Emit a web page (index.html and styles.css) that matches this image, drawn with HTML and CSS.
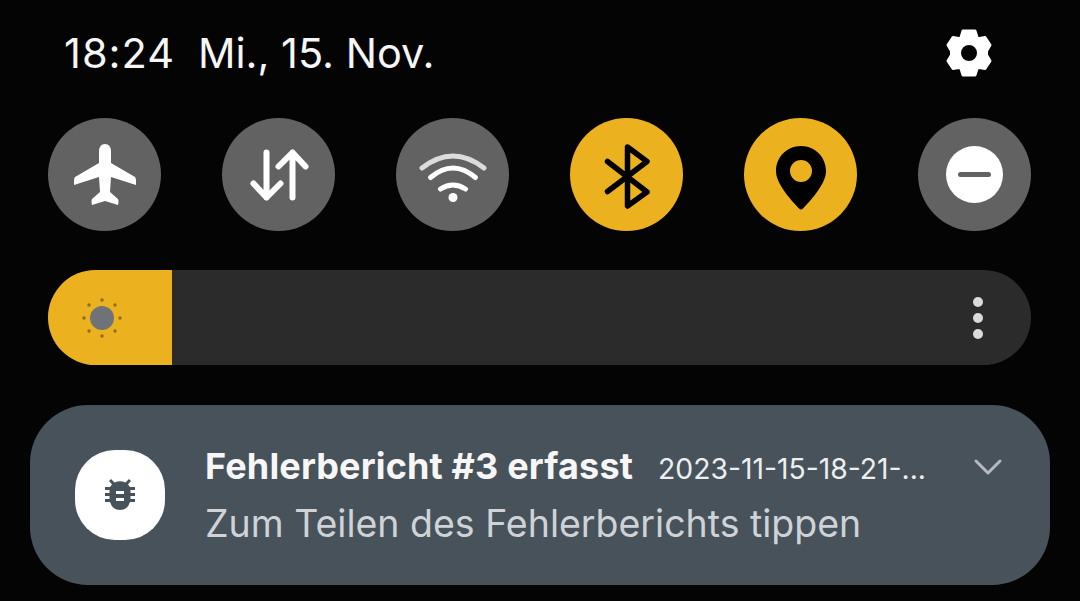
FILE: index.html
```html
<!DOCTYPE html>
<html lang="de">

<head>
    <meta charset="UTF-8">
    <title>Schnelleinstellungen</title>
    <link rel="stylesheet" href="styles.css">
</head>

<body>
    <!-- Status row -->
    <div class="status">
        <div class="clock">
            <span class="time">18:24</span>
            <span class="date">Mi., 15. Nov.</span>
        </div>
        <svg class="gear" viewBox="0 0 48 48">
            <path fill="#fff" stroke="#fff" stroke-width="3" stroke-linejoin="round" fill-rule="evenodd" d="M18 2 H30 L32 8.500 Q33 9.500 34.500 9.500 L40 8.500 L45 16 L41.500 22 V26 L45 32 L40 39.500 L34.500 38.500 Q33 38.500 32 39.500 L30 46 H18 L16 39.500 Q15 38.500 13.500 38.500 L8 39.500 L3 32 L6.500 26 V22 L3 16 L8 8.500 L13.500 9.500 Q15 9.500 16 8.500 Z M24 14.500 A9.500 9.500 0 1 0 24 33.500 A9.500 9.500 0 1 0 24 14.500 Z" />
        </svg>
    </div>

    <!-- Quick toggles -->
    <div class="toggles">
        <div class="toggle">
            <svg viewBox="0 0 62 62" width="62" height="62">
                <path fill="#fff" d="M31 0 Q37 0 37 8 V19 L61 33 Q62.500 35 62 41 L37 33 L36 48 L44 55 Q45 57 44 61 L31 57 L18 61 Q17 57 18 55 L26 48 L25 33 L0 41 Q-0.500 35 1 33 L25 19 V8 Q25 0 31 0 Z" />
            </svg>
        </div>
        <div class="toggle">
            <svg viewBox="0 0 62 62" width="62" height="62" fill="none" stroke="#fff" stroke-width="6" stroke-linecap="round" stroke-linejoin="round">
                <path d="M18.500 8.500 V53.500 M5.500 39.500 L18.500 53.500 L32.500 39.500" />
                <path d="M44.500 53.500 V8.500 M30.500 22.500 L44.500 8.500 L57.500 22.500" />
            </svg>
        </div>
        <div class="toggle">
            <svg viewBox="0 0 68 56" width="68" height="56" fill="none" stroke="#fff" stroke-width="5" stroke-linecap="round">
                <path stroke="#dcdcdc" d="M3 21 Q34 -3 65 21" />
                <path d="M11.500 30.500 Q34 11.500 56.500 30.500" />
                <path d="M21.500 42 Q34 34 46.500 42" />
                <circle cx="34" cy="50.500" r="4.500" fill="#fff" stroke="none" />
            </svg>
        </div>
        <div class="toggle on">
            <svg viewBox="0 -3 46 68" width="46" height="68" fill="none" stroke="#000" stroke-width="5.500" stroke-linecap="round" stroke-linejoin="round">
                <path d="M3.500 17.500 L43 48 L23.500 62 V3 L43 17.500 L3.500 47.500" />
            </svg>
        </div>
        <div class="toggle on">
            <svg viewBox="0 -6 50 70" width="50" height="70">
                <path fill="#000" fill-rule="evenodd" d="M25 0 C39 0 50 11 50 25 C50 37 37 52 27 62.500 Q25 64.500 23 62.500 C13 52 0 37 0 25 C0 11 11 0 25 0 Z M25 14 A11 11 0 1 0 25 36 A11 11 0 1 0 25 14 Z" />
            </svg>
        </div>
        <div class="toggle">
            <div class="dnd"><span></span></div>
        </div>
    </div>

    <!-- Brightness -->
    <div class="brightness">
        <div class="level">
            <svg viewBox="0 0 40 40" width="40" height="40">
                <circle cx="20" cy="20" r="12" fill="#6f7276" />
                <g fill="#8a6d1f">
                    <circle cx="20" cy="2" r="1.700" />
                    <circle cx="33" cy="7" r="1.700" />
                    <circle cx="38" cy="20" r="1.700" />
                    <circle cx="33" cy="33" r="1.700" />
                    <circle cx="20" cy="38" r="1.700" />
                    <circle cx="7" cy="33" r="1.700" />
                    <circle cx="2" cy="20" r="1.700" />
                    <circle cx="7" cy="7" r="1.700" />
                </g>
            </svg>
        </div>
        <div class="dots"><span></span><span></span><span></span></div>
    </div>

    <!-- Notification -->
    <div class="notification">
        <div class="app-icon">
            <svg viewBox="0 0 30 32" width="30" height="32">
                <path fill="#47525b" fill-rule="evenodd" d="M6 0 L9.500 3.500 Q15 1 20.500 3.500 L24 0 L26 2 L23 5.500 Q24.500 7 25 8 H30 V11 H25.500 V14 H30 V17 H25.500 V20 H30 V23 H25 Q22.500 31 15 31 Q7.500 31 5 23 H0 V20 H4.500 V17 H0 V14 H4.500 V11 H0 V8 H5 Q5.500 7 7 5.500 L4 2 Z M11 12 V15 H19 V12 Z M11 19 V22 H19 V19 Z" />
            </svg>
        </div>
        <div class="body">
            <div class="title-row">
                <span class="title">Fehlerbericht #3 erfasst</span>
                <span class="file">2023-11-15-18-21-...</span>
            </div>
            <div class="text">Zum Teilen des Fehlerberichts tippen</div>
        </div>
        <svg class="chevron" viewBox="0 0 30 18" width="30" height="18" fill="none" stroke="#b4bac0" stroke-width="3" stroke-linecap="round" stroke-linejoin="round">
            <path d="M3 3 L15 15 L27 3" />
        </svg>
    </div>
</body>

</html>
```

FILE: styles.css
```css
* {
    margin: 0;
    padding: 0;
    box-sizing: border-box;
}

html,
body {
    height: 100%;
    overflow: hidden;
}

body {
    background: #040404;
    color: white;
    font-family: Inter, Roboto, sans-serif;
    padding: 0 30px;
}

/* Status row */
.status {
    display: flex;
    justify-content: space-between;
    align-items: center;
    height: 118px;
    padding: 0 57px 12px 34px;
}

.clock {
    display: flex;
    gap: 23px;
    font-size: 41.5px;
    color: #f6f6f6;
}

.time {
    letter-spacing: 1px;
}

.gear {
    width: 48px;
    height: 48px;
}

/* Quick toggles */
.toggles {
    display: flex;
    justify-content: space-between;
    padding: 0 19px 0 18px;
}

.toggle {
    width: 113px;
    height: 113px;
    border-radius: 50%;
    background: #626262;
    display: flex;
    justify-content: center;
    align-items: center;
}

.toggle.on {
    background: #ebb11f;
}

.dnd {
    width: 57px;
    height: 57px;
    border-radius: 50%;
    background: white;
    display: flex;
    justify-content: center;
    align-items: center;
}

.dnd span {
    width: 33px;
    height: 5px;
    border-radius: 3px;
    background: #626262;
}

/* Brightness */
.brightness {
    margin: 39px 19px 0 18px;
    height: 95px;
    border-radius: 48px;
    background: #2b2b2b;
    display: flex;
    justify-content: space-between;
    align-items: center;
    overflow: hidden;
    padding-right: 48px;
}

.level {
    width: 124px;
    height: 100%;
    background: #ebb11f;
    display: flex;
    align-items: center;
    padding-left: 34px;
}

.dots {
    display: flex;
    flex-direction: column;
    gap: 6px;
}

.dots span {
    width: 10px;
    height: 10px;
    border-radius: 50%;
    background: #dadada;
}

/* Notification */
.notification {
    margin-top: 40px;
    height: 180px;
    border-radius: 58px;
    background: #47525b;
    display: flex;
    align-items: center;
    position: relative;
    padding-left: 45px;
}

.app-icon {
    width: 90px;
    height: 90px;
    border-radius: 40px;
    background: white;
    display: flex;
    justify-content: center;
    align-items: center;
}

.body {
    margin-left: 40px;
    display: flex;
    flex-direction: column;
    gap: 13px;
}

.title-row {
    display: flex;
    align-items: baseline;
    gap: 25px;
}

.title {
    font-size: 36px;
    font-weight: 700;
    letter-spacing: 0.15px;
    color: #f6f6f6;
}

.file {
    font-size: 28.3px;
    color: #eceef0;
}

.text {
    font-size: 37.5px;
    color: #cfd3d7;
}

.chevron {
    position: absolute;
    top: 53px;
    right: 47px;
}
```
